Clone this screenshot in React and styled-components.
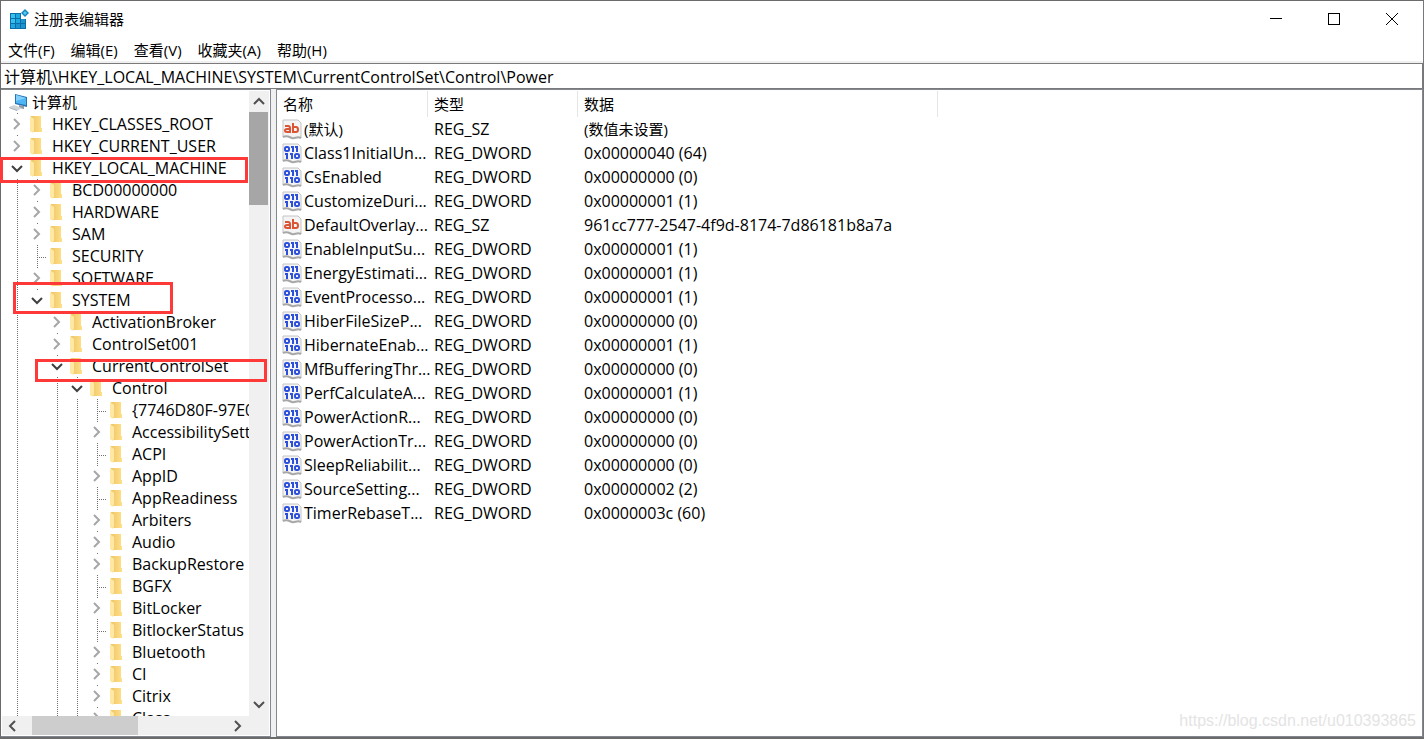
import { useState } from "react";
import styled, { createGlobalStyle } from "styled-components";

const GlobalStyle = createGlobalStyle`
  * {
    box-sizing: border-box;
  }
  body {
    margin: 0;
    background: #ffffff;
    color: #000000;
    font-family: "Open Sans", "Noto Sans CJK SC", sans-serif;
    font-size: 15px;
  }
  button,
  input {
    font: inherit;
    color: inherit;
    border: none;
    padding: 0;
    background: transparent;
  }
  svg {
    flex: none;
  }
`;

const Window = styled.div`
  position: relative;
  display: flex;
  flex-direction: column;
  height: 100vh;
  border: 1px solid #6b6b6b;
  border-bottom-width: 2px;
  border-right-color: #77777a;
`;

const TitleBar = styled.header`
  display: flex;
  align-items: center;
  height: 36px;
  flex: none;
  padding: 0 2px 0 8px;
`;

const Title = styled.h1`
  flex: 1;
  margin: 0 0 0 4px;
  font-size: 15px;
  font-weight: 400;
  line-height: 20px;
`;

const WindowButton = styled.button`
  display: flex;
  align-items: center;
  justify-content: center;
  width: 58px;
  height: 36px;
  &:hover {
    background: #e5e5e5;
  }
`;

const MenuBar = styled.nav`
  display: flex;
  align-items: center;
  gap: 16px;
  height: 26px;
  flex: none;
  padding: 2px 0 0 7px;
  border-bottom: 2px solid #f0f0f0;
`;

const MenuItem = styled.button`
  line-height: 20px;
  white-space: nowrap;
`;

const AddressBar = styled.input`
  flex: none;
  width: 100%;
  height: 26px;
  padding: 0 3px 1px;
  border: 1px solid #7a7a7a;
  border-left: none;
  outline: none;
  font-size: 16px;
`;

const Panes = styled.main`
  display: flex;
  flex: 1;
  min-height: 0;
  background: #f0f0f0;
`;

const TreePane = styled.section`
  display: grid;
  grid-template-columns: 1fr 20px;
  grid-template-rows: 1fr 19px;
  flex: none;
  width: 270px;
  padding: 1px;
  border: 1px solid #828790;
  border-left: none;
  background: #ffffff;
`;

const Tree = styled.ul`
  min-width: 0;
  min-height: 0;
  margin: 0;
  padding: 0;
  list-style: none;
  overflow: hidden;
`;

const TreeRow = styled.li`
  display: flex;
  align-items: center;
  height: 22px;
  padding-left: 5px;
  white-space: nowrap;
`;

const TreeLabel = styled.span`
  margin-left: ${({ $root }) => ($root ? "4px" : "9px")};
  font-size: ${({ $root }) => ($root ? "15px" : "16px")};
  line-height: 22px;
`;

const dots = (direction) =>
  `repeating-linear-gradient(${direction}, #707070 0 1px, transparent 1px 2px)`;

const Guide = styled.span`
  flex: none;
  width: 20px;
  height: 22px;
  background: ${({ $line }) => ($line ? dots("to bottom") : "none")} 10px 0 / 1px
    22px no-repeat;
`;

const Branch = styled.span`
  flex: none;
  width: 20px;
  height: 22px;
  background: ${dots("to bottom")} 10px 0 / 1px 22px no-repeat,
    ${dots("to right")} 10px 12px / 9px 1px no-repeat;
`;

const Expander = styled.button`
  display: flex;
  flex: none;
  align-items: center;
  justify-content: center;
  width: 20px;
  height: 22px;
  background: linear-gradient(#707070, #707070) 10px 0 / 1px 1px no-repeat;
`;

const ScrollTrack = styled.div`
  display: flex;
  flex-direction: ${({ $vertical }) => ($vertical ? "column" : "row")};
  padding-bottom: ${({ $vertical }) => ($vertical ? "2px" : "0")};
  background: #f0f0f0;
`;

const HorizontalTrack = styled(ScrollTrack)`
  grid-column: 1 / 3;
  padding-right: 20px;
`;

const ScrollButton = styled.button`
  display: flex;
  flex: none;
  align-items: center;
  justify-content: center;
  width: ${({ $vertical }) => ($vertical ? "19px" : "22px")};
  height: ${({ $vertical }) => ($vertical ? "21px" : "19px")};
`;

const ScrollArea = styled.div`
  display: flex;
  flex: 1;
  min-height: 0;
  padding-left: ${({ $offset }) => $offset || "0"};
`;

const Thumb = styled.div`
  width: ${({ $width }) => $width};
  height: ${({ $height }) => $height};
  background: ${({ $active }) => ($active ? "#a6a6a6" : "#cdcdcd")};
`;

const ListPane = styled.section`
  flex: 1;
  min-width: 0;
  margin-left: 5px;
  padding-top: 1px;
  border: 1px solid #828790;
  background: #ffffff;
  overflow: hidden;
`;

const ValueTable = styled.table`
  width: 100%;
  table-layout: fixed;
  border-collapse: separate;
  border-spacing: 0;
`;

const HeadCell = styled.th`
  width: ${({ $width }) => $width || "auto"};
  height: 26px;
  padding: 0 6px;
  border-right: ${({ $width }) => ($width ? "1px solid #e5e5e5" : "none")};
  text-align: left;
  font-weight: 400;
  line-height: 24px;
`;

const Cell = styled.td`
  height: 24px;
  padding: 0 0 0 ${({ $name }) => ($name ? "5px" : "6px")};
  font-size: ${({ $cjk }) => ($cjk ? "15px" : "16px")};
  line-height: 24px;
  vertical-align: top;
  white-space: nowrap;
`;

const ValueName = styled.span`
  display: flex;
  align-items: center;
  gap: 2px;
`;

const Highlight = styled.div`
  position: absolute;
  left: ${({ $left }) => $left}px;
  top: ${({ $top }) => $top}px;
  width: ${({ $width }) => $width}px;
  height: ${({ $height }) => $height}px;
  border: 3px solid #ff3838;
  pointer-events: none;
`;

const Watermark = styled.a`
  position: absolute;
  right: 7px;
  bottom: 6px;
  color: #e4e4e4;
  font-family: "Liberation Sans", Arial, sans-serif;
  font-size: 16px;
  line-height: 20px;
  text-decoration: none;
`;

const RegistryIcon = () => (
  <svg width="21" height="21" viewBox="0 0 21 21" aria-hidden="true">
    <path d="M1 4h11v6h5v10H1z" fill="#0b6ea8" />
    <path d="M2 5h4v4H2zM2 10h4v4H2z" fill="#35c0ee" />
    <path d="M7 5h4v4H7zM7 10h4v4H7zM2 15h4v4H2z" fill="#1fa8e0" />
    <path d="M12 10h4v4h-4zM7 15h4v4H7zM12 15h4v4h-4z" fill="#1c93cc" />
    <path d="M16 0l4 4-4 4-4-4z" fill="#1486bf" />
    <path d="M16 2l2 2-2 2-2-2z" fill="#55c8ee" />
  </svg>
);

const ComputerIcon = () => (
  <svg width="21" height="20" viewBox="0 0 21 20" aria-hidden="true">
    <path d="M8 2l12 3v10L8 12z" fill="#2474b5" />
    <path d="M9 3l10 3v7L9 11z" fill="#4fb6f5" />
    <path d="M9 3l10 3-10 3z" fill="#83d0fb" />
    <path d="M12 13l5 1v3l-5-1z" fill="#8f9aa3" />
    <path d="M2 15l5-2 8 3-5 3z" fill="#cfd4d8" />
    <path d="M2 15l8 3v1l-8-3z" fill="#a9b0b5" />
  </svg>
);

const FolderIcon = () => (
  <svg width="16" height="18" viewBox="0 0 16 18" aria-hidden="true">
    <defs>
      <linearGradient id="folderBack">
        <stop offset="0" stopColor="#eec567" />
        <stop offset="1" stopColor="#ffe08a" />
      </linearGradient>
    </defs>
    <path d="M4 1h10v12h1v4H4z" fill="url(#folderBack)" />
    <path d="M3 1l4 3v11l-1 3-3-2z" fill="#ffe8a3" />
  </svg>
);

const Sheet = () => (
  <>
    <path d="M1 1h15l3 3v15c-4-2-6 1-9 0s-5-3-9-1z" fill="#f4f4f4" />
    <path d="M1 18V1h15l3 3v15" fill="none" stroke="#c4c4c4" />
    <path
      d="M1 18c4-2 6 0 9 1s5-2 9 0"
      fill="none"
      stroke="#a8a8a8"
      strokeWidth="2"
    />
  </>
);

const StringIcon = () => (
  <svg width="20" height="21" viewBox="0 0 20 21" aria-hidden="true">
    <Sheet />
    <g fill="none" stroke="#dc5434" strokeWidth="2">
      <path d="M3 7h3q2 0 2 2v5M8 10H5q-2 0-2 1.500T5 13h3" />
      <path d="M11 4v10M11 8h3q2 0 2 2.500T14 13h-3" />
    </g>
  </svg>
);

const BinaryIcon = () => (
  <svg width="20" height="21" viewBox="0 0 20 21" aria-hidden="true">
    <Sheet />
    <g fill="none" stroke="#2d50dc" strokeWidth="2">
      <rect x="3" y="4" width="4" height="4" rx="1.500" />
      <path d="M9 4h2v5M13 4h2v5M3 11h2v5M8 11h2v5" />
      <rect x="13" y="11" width="4" height="4" rx="1.500" />
    </g>
  </svg>
);

const chevrons = {
  right: "M3 1l5 5-5 5",
  left: "M8 1L3 6l5 5",
  down: "M1 4l5 5 5-5",
  up: "M1 8l5-5 5 5",
};

const Chevron = ({ direction, color = "#505050" }) => (
  <svg width="12" height="12" viewBox="0 0 12 12" aria-hidden="true">
    <path
      d={chevrons[direction]}
      fill="none"
      stroke={color}
      strokeWidth="2"
    />
  </svg>
);

const menus = ["文件(F)", "编辑(E)", "查看(V)", "收藏夹(A)", "帮助(H)"];

// guides: one entry per ancestor level, 1 where the connecting line goes on
const level1 = [];
const level2 = [1];
const level3 = [1, 0];
const level4 = [1, 0, 1];
const level5 = [1, 0, 1, 1];

const keys = [
  { name: "HKEY_CLASSES_ROOT", guides: level1, state: "closed" },
  { name: "HKEY_CURRENT_USER", guides: level1, state: "closed" },
  { name: "HKEY_LOCAL_MACHINE", guides: level1, state: "open" },
  { name: "BCD00000000", guides: level2, state: "closed" },
  { name: "HARDWARE", guides: level2, state: "closed" },
  { name: "SAM", guides: level2, state: "closed" },
  { name: "SECURITY", guides: level2, state: "leaf" },
  { name: "SOFTWARE", guides: level2, state: "closed" },
  { name: "SYSTEM", guides: level2, state: "open" },
  { name: "ActivationBroker", guides: level3, state: "closed" },
  { name: "ControlSet001", guides: level3, state: "closed" },
  { name: "CurrentControlSet", guides: level3, state: "open" },
  { name: "Control", guides: level4, state: "open" },
  { name: "{7746D80F-97E0", guides: level5, state: "leaf" },
  { name: "AccessibilitySettings", guides: level5, state: "closed" },
  { name: "ACPI", guides: level5, state: "leaf" },
  { name: "AppID", guides: level5, state: "closed" },
  { name: "AppReadiness", guides: level5, state: "leaf" },
  { name: "Arbiters", guides: level5, state: "closed" },
  { name: "Audio", guides: level5, state: "closed" },
  { name: "BackupRestore", guides: level5, state: "closed" },
  { name: "BGFX", guides: level5, state: "leaf" },
  { name: "BitLocker", guides: level5, state: "closed" },
  { name: "BitlockerStatus", guides: level5, state: "leaf" },
  { name: "Bluetooth", guides: level5, state: "closed" },
  { name: "CI", guides: level5, state: "closed" },
  { name: "Citrix", guides: level5, state: "closed" },
  { name: "Class", guides: level5, state: "closed" },
];

const values = [
  ["(默认)", "REG_SZ", "(数值未设置)"],
  ["Class1InitialUn...", "REG_DWORD", "0x00000040 (64)"],
  ["CsEnabled", "REG_DWORD", "0x00000000 (0)"],
  ["CustomizeDuri...", "REG_DWORD", "0x00000001 (1)"],
  ["DefaultOverlay...", "REG_SZ", "961cc777-2547-4f9d-8174-7d86181b8a7a"],
  ["EnableInputSu...", "REG_DWORD", "0x00000001 (1)"],
  ["EnergyEstimati...", "REG_DWORD", "0x00000001 (1)"],
  ["EventProcesso...", "REG_DWORD", "0x00000001 (1)"],
  ["HiberFileSizeP...", "REG_DWORD", "0x00000000 (0)"],
  ["HibernateEnab...", "REG_DWORD", "0x00000001 (1)"],
  ["MfBufferingThr...", "REG_DWORD", "0x00000000 (0)"],
  ["PerfCalculateA...", "REG_DWORD", "0x00000001 (1)"],
  ["PowerActionR...", "REG_DWORD", "0x00000000 (0)"],
  ["PowerActionTr...", "REG_DWORD", "0x00000000 (0)"],
  ["SleepReliabilit...", "REG_DWORD", "0x00000000 (0)"],
  ["SourceSetting...", "REG_DWORD", "0x00000002 (2)"],
  ["TimerRebaseT...", "REG_DWORD", "0x0000003c (60)"],
];

const isCjk = (text) => /[\u4e00-\u9fff]/.test(text);

const TreeKey = ({ item }) => (
  <TreeRow>
    {item.guides.map((line, i) => (
      <Guide key={i} $line={line} />
    ))}
    {item.state === "leaf" ? (
      <Branch />
    ) : (
      <Expander aria-label={item.name} aria-expanded={item.state === "open"}>
        {item.state === "open" ? (
          <Chevron direction="down" color="#404040" />
        ) : (
          <Chevron direction="right" color="#a6a6a6" />
        )}
      </Expander>
    )}
    <FolderIcon />
    <TreeLabel>{item.name}</TreeLabel>
  </TreeRow>
);

const App = () => {
  const [path, setPath] = useState(
    "计算机\\HKEY_LOCAL_MACHINE\\SYSTEM\\CurrentControlSet\\Control\\Power"
  );

  return (
    <>
      <GlobalStyle />
      <Window>
        <TitleBar>
          <RegistryIcon />
          <Title>注册表编辑器</Title>
          <WindowButton aria-label="最小化">
            <svg width="12" height="12" shapeRendering="crispEdges">
              <path d="M0 5h12v1H0z" />
            </svg>
          </WindowButton>
          <WindowButton aria-label="最大化">
            <svg width="12" height="12" shapeRendering="crispEdges">
              <path d="M0 0h12v12H0zM1 1v10h10V1z" fillRule="evenodd" />
            </svg>
          </WindowButton>
          <WindowButton aria-label="关闭">
            <svg width="12" height="12">
              <path d="M0 0l12 12M12 0L0 12" stroke="#000000" />
            </svg>
          </WindowButton>
        </TitleBar>
        <MenuBar>
          {menus.map((menu) => (
            <MenuItem key={menu}>{menu}</MenuItem>
          ))}
        </MenuBar>
        <AddressBar
          aria-label="地址"
          value={path}
          onChange={(e) => setPath(e.target.value)}
        />
        <Panes>
          <TreePane>
            <Tree>
              <TreeRow $root>
                <ComputerIcon />
                <TreeLabel $root>计算机</TreeLabel>
              </TreeRow>
              {keys.map((item) => (
                <TreeKey key={item.name} item={item} />
              ))}
            </Tree>
            <ScrollTrack $vertical>
              <ScrollButton $vertical aria-label="向上滚动">
                <Chevron direction="up" />
              </ScrollButton>
              <ScrollArea>
                <Thumb $width="19px" $height="93px" $active />
              </ScrollArea>
              <ScrollButton $vertical aria-label="向下滚动">
                <Chevron direction="down" />
              </ScrollButton>
            </ScrollTrack>
            <HorizontalTrack>
              <ScrollButton aria-label="向左滚动">
                <Chevron direction="left" />
              </ScrollButton>
              <ScrollArea $offset="8px">
                <Thumb $width="106px" $height="19px" />
              </ScrollArea>
              <ScrollButton aria-label="向右滚动">
                <Chevron direction="right" />
              </ScrollButton>
            </HorizontalTrack>
          </TreePane>
          <ListPane>
            <ValueTable>
              <thead>
                <tr>
                  <HeadCell $width="151px">名称</HeadCell>
                  <HeadCell $width="150px">类型</HeadCell>
                  <HeadCell $width="360px">数据</HeadCell>
                  <HeadCell as="td" />
                </tr>
              </thead>
              <tbody>
                {values.map(([name, type, data]) => (
                  <tr key={name}>
                    <Cell $name $cjk={isCjk(name)}>
                      <ValueName>
                        {type === "REG_SZ" ? <StringIcon /> : <BinaryIcon />}
                        {name}
                      </ValueName>
                    </Cell>
                    <Cell>{type}</Cell>
                    <Cell $cjk={isCjk(data)}>{data}</Cell>
                  </tr>
                ))}
              </tbody>
            </ValueTable>
          </ListPane>
        </Panes>
        <Highlight $left={-1} $top={156} $width={248} $height={26} />
        <Highlight $left={12} $top={281} $width={160} $height={32} />
        <Highlight $left={34} $top={358} $width={232} $height={23} />
        <Watermark href="https://blog.csdn.net/u010393865">
          https://blog.csdn.net/u010393865
        </Watermark>
      </Window>
    </>
  );
};

export default App;
